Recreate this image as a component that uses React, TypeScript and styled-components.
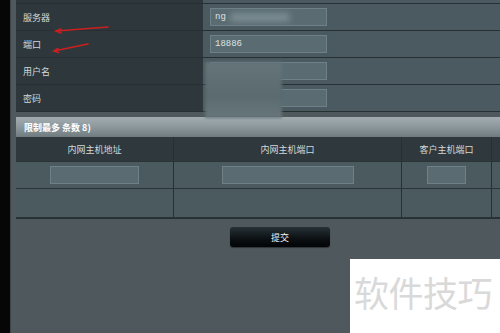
import React from "react";
import styled, { createGlobalStyle } from "styled-components";

const Global = createGlobalStyle`
  html, body { margin: 0; padding: 0; background: #050505; }
  body { font-family: "Noto Sans CJK SC", "Noto Sans", sans-serif; }
`;

const Page = styled.div`
  position: relative;
  width: 500px;
  height: 333px;
  overflow: hidden;
  display: flex;
`;

const LeftBar = styled.div`
  width: 10px;
  flex: none;
  background: #060606;
  border-right: 1px solid #3d474b;
`;

const Main = styled.div`
  flex: 1;
  min-width: 0;
  background: #4f585c;
  padding-left: 5px;
  overflow: hidden;
`;

const Form = styled.div`
  display: flex;
  flex-direction: column;
  border-bottom: 1px solid #263033;
`;

const FormRow = styled.div<{ $h: number }>`
  display: grid;
  grid-template-columns: 187px 1fr;
  height: ${(p) => p.$h}px;
  border-top: ${(p) => (p.$h > 5 ? "1px solid #263033" : "none")};
`;

const Label = styled.div`
  background: #2e383c;
  color: #d3d8da;
  font-size: 9px;
  display: flex;
  align-items: center;
  padding-left: 7px;
`;

const Value = styled.div`
  background: #4a5a60;
  display: flex;
  align-items: center;
  padding-left: 7px;
`;

const Input = styled.div<{ $w: number }>`
  position: relative;
  width: ${(p) => p.$w}px;
  height: 18px;
  box-sizing: border-box;
  background: #5a6c72;
  border: 1px solid #6e8188;
  color: #dde4e6;
  font-family: "Liberation Mono", "DejaVu Sans Mono", monospace;
  font-size: 9px;
  display: flex;
  align-items: center;
  padding-left: 4px;
  overflow: hidden;
`;

const Smudge = styled.span`
  display: inline-block;
  width: 60px;
  height: 9px;
  margin-left: 4px;
  background: #7b8d93;
  filter: blur(3px);
  border-radius: 4px;
`;

const Table = styled.div`
  margin-top: 5px;
  width: 500px;
  border-bottom: 1px solid #263033;
`;

const TitleBar = styled.div`
  height: 20px;
  background: linear-gradient(#a3adb1, #8a959a 55%, #707b80);
  color: #ffffff;
  font-weight: bold;
  font-size: 9px;
  display: flex;
  align-items: center;
  padding-left: 8px;
`;

const Grid = styled.div<{ $h: number; $bg: string }>`
  display: grid;
  grid-template-columns: 157px 228px 90px 25px;
  height: ${(p) => p.$h}px;
  background: ${(p) => p.$bg};
  border-bottom: 1px solid #2a3336;
`;

const Cell = styled.div<{ $first?: boolean }>`
  display: flex;
  align-items: center;
  justify-content: center;
  color: #d3d8da;
  font-size: 9px;
  border-left: ${(p) => (p.$first ? "none" : "1px solid #263033")};
`;

const ButtonRow = styled.div`
  display: flex;
  padding: 8px 0 0 214px;
`;

const SubmitButton = styled.button`
  display: block;
  width: 100px;
  height: 20px;
  border: none;
  border-radius: 3px;
  background: linear-gradient(#273136, #0b1013 60%, #020406);
  color: #f4f4f4;
  font-family: "Noto Sans CJK SC", sans-serif;
  font-size: 9px;
  padding: 0;
  box-shadow: 0 1px 1px rgba(0, 0, 0, 0.4);
`;

const Redaction = styled.div`
  position: absolute;
  left: 205px;
  top: 62px;
  width: 77px;
  height: 56px;
  background: linear-gradient(#647479, #5a6a6f 60%, #66767a);
  filter: blur(1.5px);
`;

const Watermark = styled.div`
  position: absolute;
  left: 350px;
  top: 259px;
  width: 150px;
  height: 74px;
  background: #ffffff;
  color: #d9d9d9;
  font-family: "Noto Sans CJK SC", sans-serif;
  font-size: 35px;
  line-height: 1;
  padding: 15px 0 0 4px;
  box-sizing: border-box;
  letter-spacing: -0.5px;
  white-space: nowrap;
`;

const Arrows = styled.svg`
  position: absolute;
  left: 0;
  top: 0;
  pointer-events: none;
`;

const rows = [
  { label: "", h: 3, input: null as React.ReactNode },
  { label: "服务器", h: 26, input: <>ng<Smudge /></> },
  { label: "端口", h: 26, input: "18886" },
  { label: "用户名", h: 26, input: "" },
  { label: "密码", h: 26, input: "" },
];

export default function App() {
  return (
    <>
      <Global />
      <Page>
        <LeftBar />
        <Main>
          <Form>
            {rows.map((r, i) => (
              <FormRow key={i} $h={r.h}>
                <Label>{r.label}</Label>
                <Value>{r.input !== null && <Input $w={117}>{r.input}</Input>}</Value>
              </FormRow>
            ))}
          </Form>
          <Table>
            <TitleBar>限制最多 条数 8)</TitleBar>
            <Grid $h={24} $bg="#2f393d">
              <Cell $first>内网主机地址</Cell>
              <Cell>内网主机端口</Cell>
              <Cell>客户主机端口</Cell>
              <Cell />
            </Grid>
            <Grid $h={26} $bg="#4b5a5f">
              <Cell $first><Input $w={89} /></Cell>
              <Cell><Input $w={132} /></Cell>
              <Cell><Input $w={39} /></Cell>
              <Cell />
            </Grid>
            <Grid $h={28} $bg="#4b5a5f">
              <Cell $first />
              <Cell />
              <Cell />
              <Cell />
            </Grid>
          </Table>
          <ButtonRow>
            <SubmitButton>提交</SubmitButton>
          </ButtonRow>
        </Main>
        <Redaction />
        <Arrows width="500" height="333" viewBox="0 0 500 333">
          <g stroke="#cc1f1f" strokeWidth="1.6" fill="none" strokeLinecap="round">
            <path d="M108 27 L57 31" />
            <path d="M61 29 L56 31 L61 33" />
            <path d="M88 44 L54 51" />
            <path d="M58 48.5 L54 51 L58.5 52.5" />
          </g>
        </Arrows>
        <Watermark>软件技巧</Watermark>
      </Page>
    </>
  );
}
